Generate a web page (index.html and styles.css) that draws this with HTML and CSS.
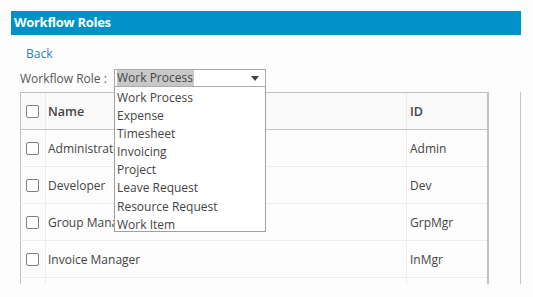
FILE: index.html
```html
<!DOCTYPE html>
<html>
<head>
<meta charset="utf-8">
<link rel="stylesheet" href="styles.css">
</head>
<body>
<div class="page">
  <div class="titlebar">Workflow Roles</div>
  <div class="content">
    <a class="back" href="#">Back</a>
    <div class="role-row">
      <span class="role-label">Workflow Role :</span>
      <div class="select">
        <span class="sel-text">Work Process</span>
        <span class="arrow"></span>
      </div>
    </div>
    <div class="grid-wrap">
      <table class="grid">
        <colgroup><col class="c-chk"><col class="c-name"><col class="c-id"></colgroup>
        <thead>
          <tr><th><span class="chk"></span></th><th>Name</th><th>ID</th></tr>
        </thead>
        <tbody>
          <tr><td><span class="chk"></span></td><td>Administrator</td><td>Admin</td></tr>
          <tr><td><span class="chk"></span></td><td>Developer</td><td>Dev</td></tr>
          <tr><td><span class="chk"></span></td><td>Group Manager</td><td>GrpMgr</td></tr>
          <tr><td><span class="chk"></span></td><td>Invoice Manager</td><td>InMgr</td></tr>
          <tr class="partial"><td></td><td></td><td></td></tr>
        </tbody>
      </table>
    </div>
  </div>
  <ul class="dropdown">
    <li>Work Process</li>
    <li>Expense</li>
    <li>Timesheet</li>
    <li>Invoicing</li>
    <li>Project</li>
    <li>Leave Request</li>
    <li>Resource Request</li>
    <li>Work Item</li>
  </ul>
</div>
</body>
</html>
```
FILE: styles.css
```css
html, body {
  margin: 0;
  padding: 0;
  background: #fdfdfd;
}
body {
  font-family: "Open Sans", "DejaVu Sans", sans-serif;
  font-size: 12px;
  color: #444;
}
.page {
  position: relative;
  width: 533px;
  height: 297px;
  overflow: hidden;
}
.titlebar {
  margin: 11px 12px 0 11px;
  height: 24px;
  line-height: 23px;
  background: #0091c9;
  color: #fff;
  font-weight: bold;
  font-size: 13px;
  padding-left: 3px;
  letter-spacing: -0.3px;
}
.content {
  padding-left: 20px;
}
.back {
  display: block;
  margin: 10px 0 0 6px;
  height: 18px;
  line-height: 18px;
  color: #2a80c2;
  text-decoration: none;
}
.role-row {
  display: flex;
  align-items: center;
  margin-top: 6px;
  height: 18px;
}
.role-label {
  width: 94px;
  color: #555;
}
.select {
  box-sizing: border-box;
  width: 152px;
  height: 18px;
  border: 1px solid #aaa;
  background: #fff;
  display: flex;
  align-items: center;
  justify-content: space-between;
  padding: 0 6px 0 2px;
}
.sel-text {
  background: #c8c8c8;
  color: #444;
  line-height: 16px;
  padding-right: 1px;
}
.arrow {
  width: 0;
  height: 0;
  border-left: 4.5px solid transparent;
  border-right: 4.5px solid transparent;
  border-top: 5px solid #444;
}
.grid-wrap {
  margin-top: 5px;
  width: 501px;
  height: 192px;
  overflow: hidden;
  border-right: 1px solid #c4c4c4;
  box-sizing: border-box;
}
.grid {
  border-collapse: collapse;
  width: 468px;
  table-layout: fixed;
}
.c-chk { width: 25px; }
.c-name { width: 361px; }
.c-id { width: 81px; }
.grid th, .grid td {
  height: 36px;
  padding: 0;
  text-align: left;
  border-left: 1px solid #ececec;
  border-bottom: 1px solid #ececec;
}
.grid th:first-child, .grid td:first-child {
  border-left: 1px solid #c0c0c0;
}
.grid th:last-child, .grid td:last-child {
  border-right: 2px solid #c0c0c0;
}
.grid thead th {
  background: #fafafa;
  border-top: 1px solid #c0c0c0;
  border-bottom: 1px solid #c4c4c4;
  font-weight: 600;
  color: #444;
  font-size: 12.5px;
}
.grid th:nth-child(2), .grid td:nth-child(2) { padding-left: 2px; }
.grid th:nth-child(3), .grid td:nth-child(3) { padding-left: 3px; }
.chk {
  display: block;
  box-sizing: border-box;
  width: 13px;
  height: 13px;
  margin-left: 5px;
  border: 1px solid #808080;
  border-radius: 2px;
  background: #fff;
}
.dropdown {
  position: absolute;
  left: 114px;
  top: 87px;
  width: 152px;
  height: 145px;
  box-sizing: border-box;
  margin: 0;
  padding: 2px 0 0 0;
  list-style: none;
  background: #fff;
  border: 1px solid #a0a0a0;
  border-top: none;
}
.dropdown li {
  height: 18.1px;
  line-height: 18px;
  padding-left: 2px;
  color: #444;
}
```
